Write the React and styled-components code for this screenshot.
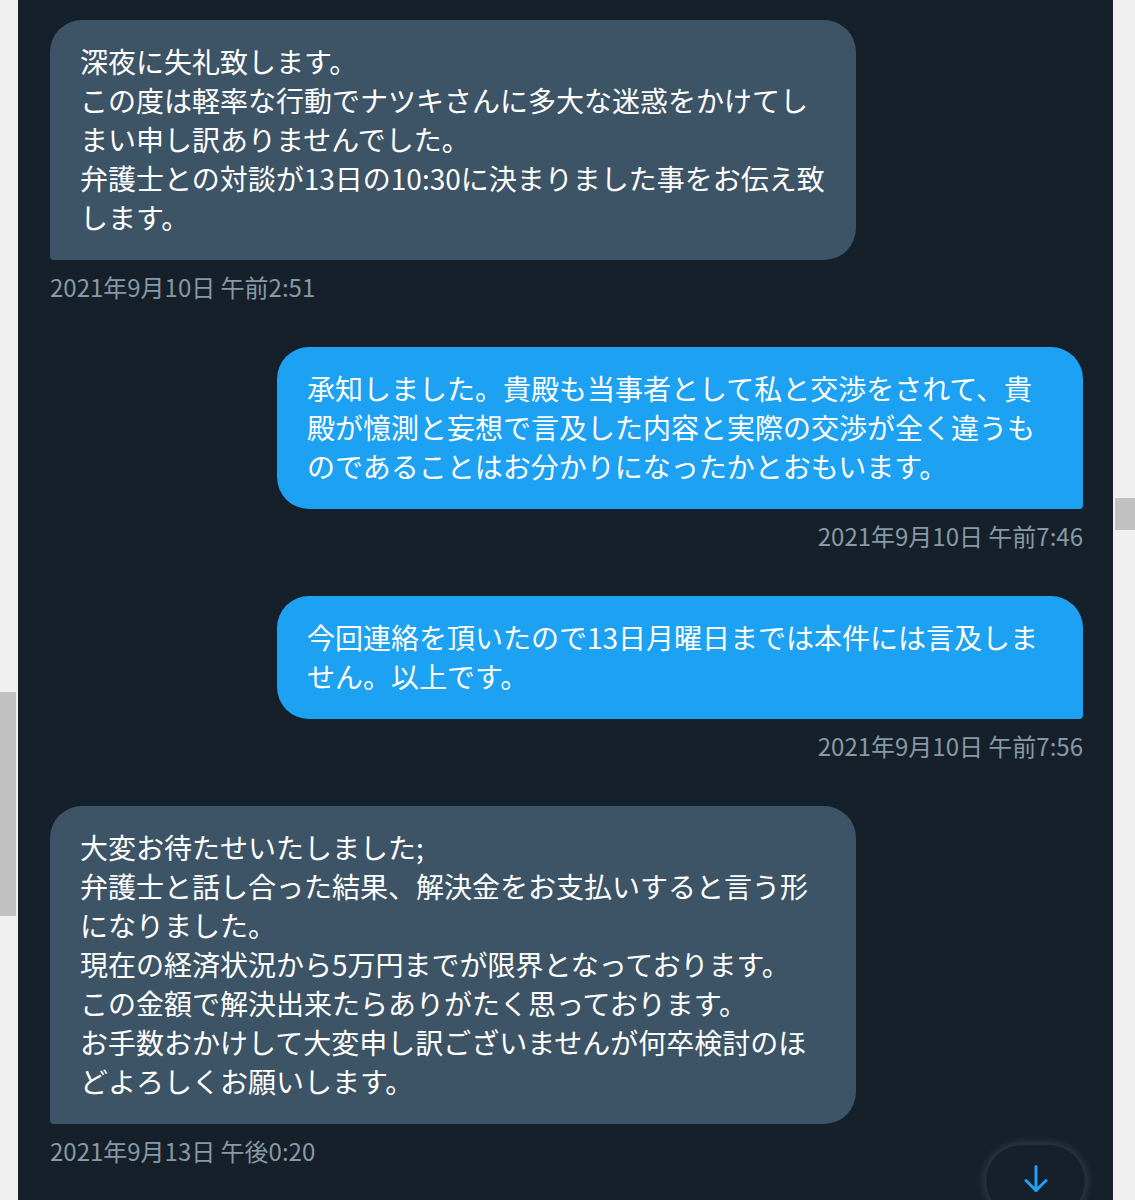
import React from "react";
import styled, { createGlobalStyle } from "styled-components";

const messages = [
  {
    id: 1,
    mine: false,
    text:
      "深夜に失礼致します。\nこの度は軽率な行動でナツキさんに多大な迷惑をかけてしまい申し訳ありませんでした。\n弁護士との対談が13日の10:30に決まりました事をお伝え致します。",
    time: "2021年9月10日 午前2:51",
  },
  {
    id: 2,
    mine: true,
    text:
      "承知しました。貴殿も当事者として私と交渉をされて、貴殿が憶測と妄想で言及した内容と実際の交渉が全く違うものであることはお分かりになったかとおもいます。",
    time: "2021年9月10日 午前7:46",
  },
  {
    id: 3,
    mine: true,
    text: "今回連絡を頂いたので13日月曜日までは本件には言及しません。以上です。",
    time: "2021年9月10日 午前7:56",
  },
  {
    id: 4,
    mine: false,
    text:
      "大変お待たせいたしました;\n弁護士と話し合った結果、解決金をお支払いすると言う形になりました。\n現在の経済状況から5万円までが限界となっております。\nこの金額で解決出来たらありがたく思っております。\nお手数おかけして大変申し訳ございませんが何卒検討のほどよろしくお願いします。",
    time: "2021年9月13日 午後0:20",
  },
];

export default function App() {
  return (
    <>
      <GlobalStyle />
      <Screen>
        <SideScroll>
          <Thumb top={692} height={224} width={16} />
        </SideScroll>
        <Conversation>
          <MessageList>
            {messages.map((m) => (
              <MessageGroup key={m.id} mine={m.mine}>
                <Bubble mine={m.mine}>{m.text}</Bubble>
                <Stamp>{m.time}</Stamp>
              </MessageGroup>
            ))}
          </MessageList>
          <ScrollDownButton aria-label="下にスクロール">
            <svg width="24" height="28" viewBox="0 0 24 28" fill="none">
              <path
                d="M12 1.5v24M2 15.5l10 10 10-10"
                stroke="#1da1f2"
                strokeWidth="3"
                strokeLinecap="round"
                strokeLinejoin="round"
              />
            </svg>
          </ScrollDownButton>
        </Conversation>
        <RightScroll>
          <Thumb top={498} height={32} width={20} />
        </RightScroll>
      </Screen>
    </>
  );
}

const GlobalStyle = createGlobalStyle`
  html, body {
    margin: 0;
    padding: 0;
    background: #f0f0f0;
  }
  body {
    font-family: "Noto Sans CJK JP", "Noto Sans", sans-serif;
  }
`;

const Screen = styled.div`
  display: flex;
  width: 1135px;
  height: 1200px;
  overflow: hidden;
`;

const SideScroll = styled.div`
  width: 18px;
  flex-shrink: 0;
  background: #f0f0f0;
  display: flex;
  flex-direction: column;
`;

const RightScroll = styled.div`
  width: 22px;
  flex-shrink: 0;
  background: #f0f0f0;
  display: flex;
  flex-direction: column;
  align-items: flex-end;
`;

const Thumb = styled.div`
  margin-top: ${(p) => p.top}px;
  height: ${(p) => p.height}px;
  width: ${(p) => p.width}px;
  background: #c1c1c1;
`;

const Conversation = styled.div`
  position: relative;
  flex: 1;
  background: #15202b;
`;

const MessageList = styled.div`
  display: flex;
  flex-direction: column;
  padding: 20px 30px 0 32px;
`;

const MessageGroup = styled.div`
  display: flex;
  flex-direction: column;
  align-items: ${(p) => (p.mine ? "flex-end" : "flex-start")};
  margin-bottom: 45px;
`;

const Bubble = styled.div`
  max-width: 806px;
  box-sizing: border-box;
  padding: 22px 30px 23px 30px;
  border-radius: ${(p) => (p.mine ? "32px 32px 4px 32px" : "32px 32px 32px 4px")};
  background: ${(p) => (p.mine ? "#1da1f2" : "#3d5466")};
  color: #ffffff;
  font-size: 28px;
  line-height: 39px;
  white-space: pre-wrap;
  word-break: break-all;
`;

const Stamp = styled.div`
  margin-top: 12px;
  color: #8899a6;
  font-size: 24px;
  line-height: 30px;
  white-space: nowrap;
`;

const ScrollDownButton = styled.button`
  position: absolute;
  right: 28px;
  top: 1145px;
  width: 99px;
  height: 72px;
  border: none;
  border-radius: 40px;
  background: #15202b;
  box-shadow: 0 0 8px 2px rgba(136, 153, 166, 0.25);
  display: flex;
  justify-content: center;
  padding-top: 20px;
  cursor: pointer;
`;
